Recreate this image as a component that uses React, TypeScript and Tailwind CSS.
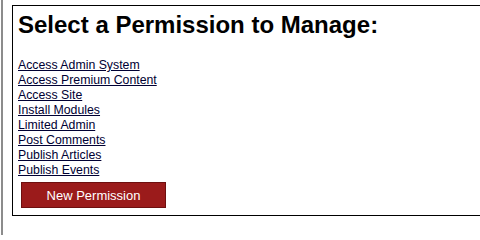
const permissions = [
  'Access Admin System',
  'Access Premium Content',
  'Access Site',
  'Install Modules',
  'Limited Admin',
  'Post Comments',
  'Publish Articles',
  'Publish Events',
];

export default function App() {
  return (
    <div className="w-[480px] h-[235px] overflow-hidden bg-white pl-px font-['Liberation_Sans',Arial,sans-serif]">
      <div className="h-full border-l-2 border-[#8c8c8c] pl-[9px] pt-[5px]">
        <div className="w-[540px] border border-black p-[5px] pb-[7px]">
          <h1 className="text-[24px] leading-[27px] font-bold text-black">
            Select a Permission to Manage:
          </h1>
          <ul className="mt-[20px]">
            {permissions.map((p) => (
              <li key={p} className="text-[12.3px] leading-[15px]">
                <a href="#" className="text-[#000033] underline">
                  {p}
                </a>
              </li>
            ))}
          </ul>
          <button
            type="button"
            className="ml-[3px] mt-[4px] w-[145px] h-[26px] bg-[#9b1b1b] border border-[#6e0f0f] text-white text-[13px] leading-none"
          >
            New Permission
          </button>
        </div>
      </div>
    </div>
  );
}
